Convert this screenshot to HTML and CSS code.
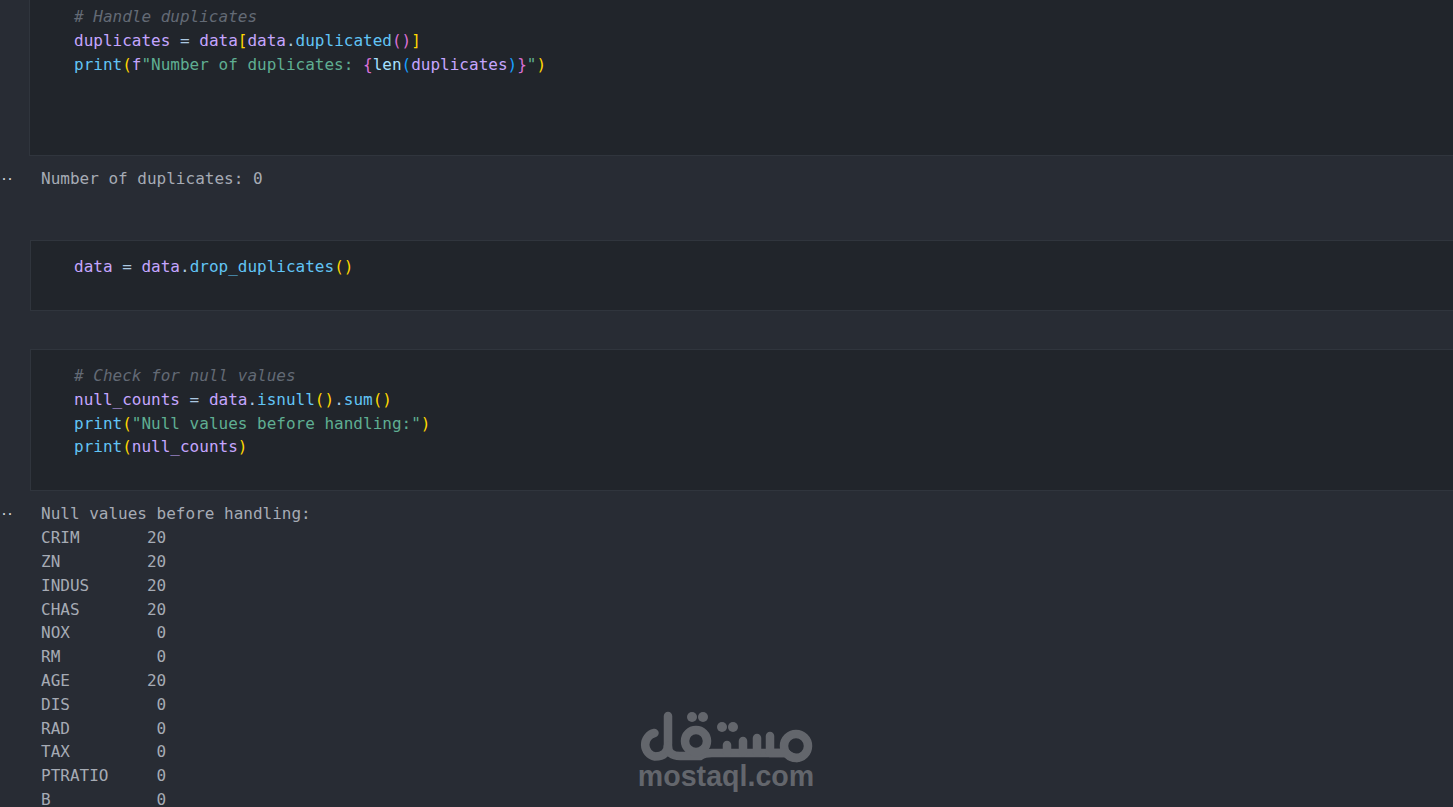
FILE: index.html
```html
<!DOCTYPE html>
<html lang="en">
<head>
<meta charset="utf-8">
<title>Notebook</title>
<link rel="stylesheet" href="styles.css">
</head>
<body>
<main class="notebook">
  <section class="cell cell-first">
    <pre class="code"><span class="cm"># Handle duplicates</span>
<span class="v">duplicates</span> <span class="o">=</span> <span class="v">data</span><span class="b1">[</span><span class="v">data</span><span class="o">.</span><span class="f">duplicated</span><span class="b2">()</span><span class="b1">]</span>
<span class="f">print</span><span class="b1">(</span><span class="k">f</span><span class="s">"Number of duplicates: </span><span class="b2">{</span><span class="l">len</span><span class="b3">(</span><span class="v">duplicates</span><span class="b3">)</span><span class="b2">}</span><span class="s">"</span><span class="b1">)</span></pre>
  </section>
  <section class="output output-short">
    <span class="dots">··</span>
    <pre class="out">Number of duplicates: 0</pre>
  </section>
  <section class="cell cell-second">
    <pre class="code"><span class="v">data</span> <span class="o">=</span> <span class="v">data</span><span class="o">.</span><span class="f">drop_duplicates</span><span class="b1">()</span></pre>
  </section>
  <section class="cell cell-third">
    <pre class="code"><span class="cm"># Check for null values</span>
<span class="v">null_counts</span> <span class="o">=</span> <span class="v">data</span><span class="o">.</span><span class="f">isnull</span><span class="b1">()</span><span class="o">.</span><span class="f">sum</span><span class="b1">()</span>
<span class="f">print</span><span class="b1">(</span><span class="s">"Null values before handling:"</span><span class="b1">)</span>
<span class="f">print</span><span class="b1">(</span><span class="v">null_counts</span><span class="b1">)</span></pre>
  </section>
  <section class="output output-long">
    <span class="dots">··</span>
    <pre class="out">Null values before handling:
CRIM       20
ZN         20
INDUS      20
CHAS       20
NOX         0
RM          0
AGE        20
DIS         0
RAD         0
TAX         0
PTRATIO     0
B           0</pre>
  </section>
</main>
<div class="watermark">
  <svg class="mark" width="176" height="58" viewBox="638 708 176 58" aria-hidden="true">
    <g fill="none" stroke="#63666c" stroke-width="8.500" stroke-linecap="round" stroke-linejoin="round">
      <path d="M668 716V744Q668 756.500 655 756.500A12 12 0 0 1 654.500 733"/>
      <path d="M668 746Q668 756 680 756H700Q704 753 712 753H784"/>
      <circle cx="696" cy="741" r="11"/>
      <path d="M727 752V745"/>
      <path d="M743 752V741"/>
      <path d="M757 752V738"/>
      <path d="M770 752V736"/>
      <circle cx="796" cy="746" r="12"/>
      <path d="M770 753H786Q792 758 797 758"/>
    </g>
    <g fill="#63666c">
      <circle cx="692" cy="717" r="5"/><circle cx="703" cy="717" r="5"/>
      <circle cx="722" cy="727" r="5"/><circle cx="733" cy="727" r="5"/>
    </g>
  </svg>
  <span class="wordmark">mostaql.com</span>
</div>
</body>
</html>
```
FILE: styles.css
```css
html, body { margin: 0; padding: 0; height: 807px; overflow: hidden; background: #282c34; }
.notebook { display: flex; flex-direction: column; }
pre { margin: 0; font-family: "DejaVu Sans Mono", monospace; font-size: 16px; line-height: 23.8px; }
.cell { margin-left: 30px; background: #21252b; border: 1px solid #30353d; border-right: 0; box-sizing: border-box; padding-left: 43px; }
.cell-first { height: 157px; margin-top: -1px; margin-left: 29px; padding-left: 44px; padding-top: 5px; }
.cell-second { height: 71px; padding-top: 14px; }
.cell-third { height: 142px; margin-top: 38px; padding-top: 14px; }
.output { display: flex; background: #282c34; color: #abb2bf; }
.output-short { height: 84px; padding-top: 11px; box-sizing: border-box; }
.output-long { padding-top: 11.4px; }
.dots { width: 41px; flex: none; box-sizing: border-box; padding: 1px 0 0 1px; color: #d0d4da; font: bold 10px/23.8px "DejaVu Sans Mono", monospace; }
.out { color: #a6abb4; }
.cm { color: #636a75; font-style: italic; }
.v { color: #c5a5ff; }
.f { color: #61c4f5; }
.l { color: #a5e0ff; }
.k { color: #c5a5ff; }
.o { color: #abc8e0; }
.s { color: #5fae92; }
.b1 { color: #ffd700; }
.b2 { color: #da70d6; }
.b3 { color: #179fff; }
.watermark { position: absolute; left: 638px; top: 708px; width: 176px; display: flex; flex-direction: column; align-items: center; }
.wordmark { font: bold 28.6px/30px "Liberation Sans", sans-serif; color: #63666c; margin-top: -5px; }
```
